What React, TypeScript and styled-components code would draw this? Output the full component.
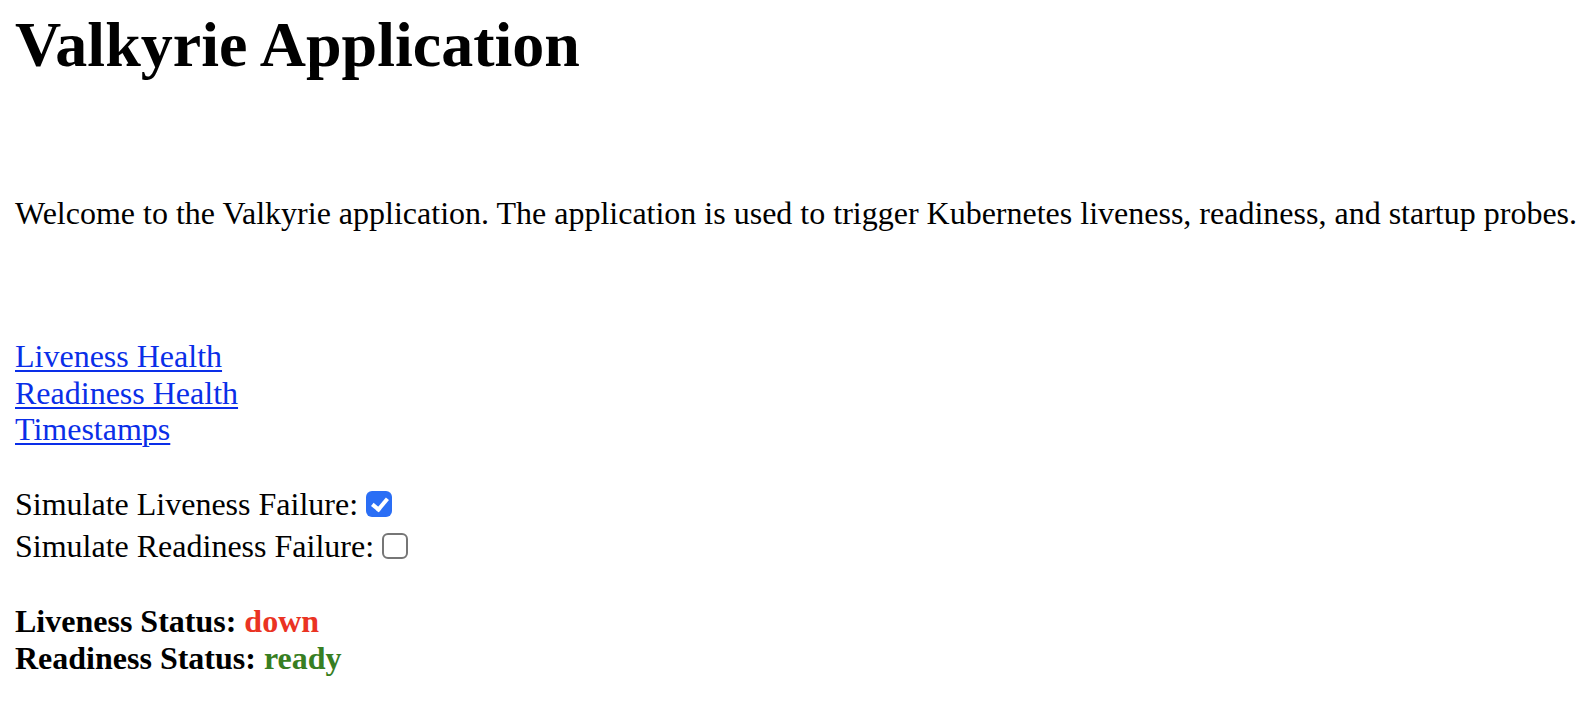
import * as React from "react"
import styled, {createGlobalStyle} from "styled-components"

const GlobalStyle = createGlobalStyle`
    html, body {
        margin: 0;
        padding: 0;
        background: #ffffff;
    }
    body {
        font-family: "Liberation Serif", "Times New Roman", serif;
        font-size: 32px;
        color: #000000;
    }
`

const Page = styled.main`
    padding: 0 15px;
`

const Title = styled.h1`
    margin: 8px 0 0;
    font-size: 64px;
    line-height: 74px;
    font-weight: bold;
`

const Intro = styled.p`
    margin: 113px 0 0;
    line-height: 36.8px;
    white-space: nowrap;
`

const LinkList = styled.nav`
    display: flex;
    flex-direction: column;
    align-items: flex-start;
    margin-top: 106px;
    line-height: 36.8px;
`

const HealthLink = styled.a`
    color: #0a2ee8;
    text-decoration: underline;
    text-underline-offset: 3px;
    text-decoration-thickness: 2px;
`

const ToggleList = styled.div`
    display: flex;
    flex-direction: column;
    margin-top: 35px;
`

const ToggleRow = styled.label`
    display: flex;
    align-items: center;
    height: 42px;
    line-height: 42px;
`

const Checkbox = styled.input.attrs({type: "checkbox"})`
    appearance: none;
    box-sizing: border-box;
    width: 26px;
    height: 26px;
    margin: 0 0 0 8px;
    border-radius: 6px;
    border: 2px solid #767676;
    background: #ffffff;
    position: relative;
    &:checked {
        border: none;
        background: #2a6ef5;
    }
    &:checked::after {
        content: "";
        position: absolute;
        left: 9px;
        top: 4px;
        width: 6px;
        height: 12px;
        border: solid #ffffff;
        border-width: 0 4px 4px 0;
        transform: rotate(40deg);
    }
`

const StatusList = styled.div`
    display: flex;
    flex-direction: column;
    margin-top: 36px;
    line-height: 36.8px;
    font-weight: bold;
`

const StatusValue = styled.span<{$tone: "down" | "ready"}>`
    color: ${props => props.$tone === "down" ? "#ea3323" : "#377e22"};
`

export default function App() {
    const [liveFail, setLiveFail] = React.useState(true)
    const [readyFail, setReadyFail] = React.useState(false)

    return (
        <Page>
            <GlobalStyle />
            <Title>Valkyrie Application</Title>
            <Intro>
                Welcome to the Valkyrie application. The application is used to trigger Kubernetes liveness, readiness, and startup probes.
            </Intro>
            <LinkList>
                <HealthLink href="#liveness">Liveness Health</HealthLink>
                <HealthLink href="#readiness">Readiness Health</HealthLink>
                <HealthLink href="#timestamps">Timestamps</HealthLink>
            </LinkList>
            <ToggleList>
                <ToggleRow>
                    Simulate Liveness Failure:
                    <Checkbox checked={liveFail} onChange={() => setLiveFail(!liveFail)} />
                </ToggleRow>
                <ToggleRow>
                    Simulate Readiness Failure:
                    <Checkbox checked={readyFail} onChange={() => setReadyFail(!readyFail)} />
                </ToggleRow>
            </ToggleList>
            <StatusList>
                <div>Liveness Status: <StatusValue $tone={liveFail ? "down" : "ready"}>{liveFail ? "down" : "up"}</StatusValue></div>
                <div>Readiness Status: <StatusValue $tone={readyFail ? "down" : "ready"}>{readyFail ? "not ready" : "ready"}</StatusValue></div>
            </StatusList>
        </Page>
    )
}
